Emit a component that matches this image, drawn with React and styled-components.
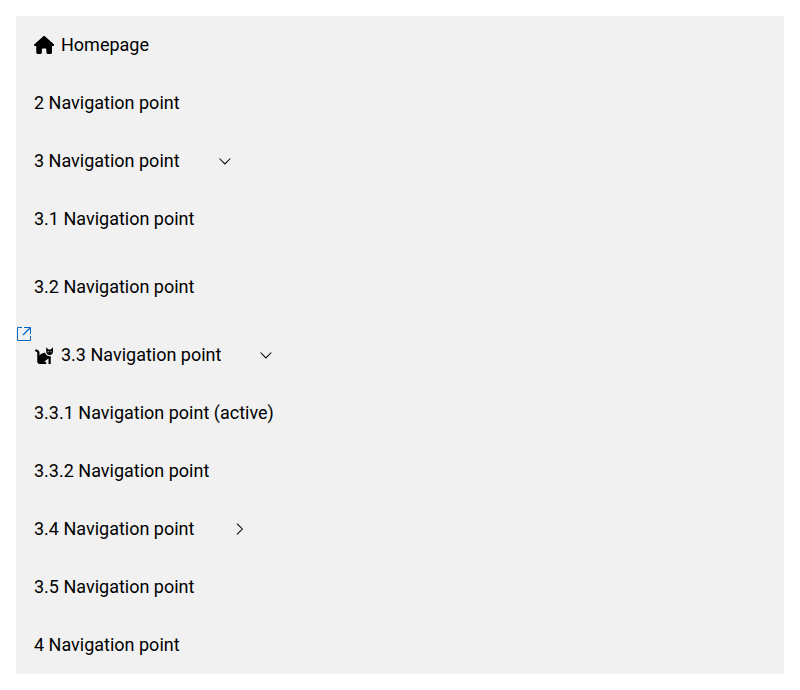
import React from "react";
import styled, { createGlobalStyle } from "styled-components";
import { FaCat } from "react-icons/fa";
import { FaHouse } from "react-icons/fa6";
const Global = createGlobalStyle`
  body { margin: 0; background: #fff; font-family: Roboto, sans-serif; -webkit-font-smoothing: antialiased; }
`;
const Nav = styled.nav`
  margin: 16px; background: #f1f1f1; color: #000;
`;
const List = styled.ul`
  list-style: none; margin: 0; padding: 0;
`;
const Item = styled.li`
  margin-bottom: ${(p) => p.$gap || 0}px;
`;
const Row = styled.div`
  display: flex; align-items: center; height: 58px; box-sizing: border-box; padding-left: 18px;
  font-size: 18px; line-height: 24px; font-weight: 400;
`;
const IconSlot = styled.span`
  display: flex; width: 20px; margin-right: 7px; justify-content: center;
  svg { flex: none; width: ${(p) => p.$width}px; height: 18px; }
`;
const Toggle = styled.button`
  display: flex; align-items: center; justify-content: center; width: 18px; height: 18px;
  margin-left: 36px; padding: 0; border: 0; background: none; color: inherit;
`;
const Anchored = styled.div`
  position: relative;
`;
const External = styled.svg`
  position: absolute; left: 0; top: 0; display: block;
`;
function Chevron({ open }) {
  return (
    <svg width="18" height="18" viewBox="0 0 18 18" fill="none" stroke="currentColor" strokeWidth="1.05">
      <path d={open ? "M3.5 6.5 8.9 11.9 14.3 6.5" : "M7 3.7 12.3 9 7 14.3"} />
    </svg>
  );
}
function Point({ label, icon, iconWidth = 18, open }) {
  return (
    <Row>
      {icon && <IconSlot $width={iconWidth}>{icon}</IconSlot>}
      <span>{label}</span>
      {open !== undefined && <Toggle aria-label="Toggle submenu" aria-expanded={open}><Chevron open={open} /></Toggle>}
    </Row>
  );
}
export default function App() {
  return (
    <>
      <Global />
      <Nav>
        <List>
          <Item><Point label="Homepage" icon={<FaHouse />} iconWidth={20.25} /></Item>
          <Item><Point label="2 Navigation point" /></Item>
          <Item>
            <Point label="3 Navigation point" open />
            <List>
              <Item $gap={10}><Point label="3.1 Navigation point" /></Item>
              <Item $gap={10}><Point label="3.2 Navigation point" /></Item>
              <Item>
                <Anchored>
                  <External width="16" height="16" viewBox="0 0 16 16" fill="none" stroke="#0069c8">
                    <path d="M6 1.5H1.5v13h13V10M8 1.5h6.5V8" />
                    <path d="M14.5 1.5 7 9" strokeWidth="1.25" />
                  </External>
                  <Point label="3.3 Navigation point" icon={<FaCat />} open />
                </Anchored>
                <List>
                  <Item><Point label="3.3.1 Navigation point (active)" /></Item>
                  <Item><Point label="3.3.2 Navigation point" /></Item>
                </List>
              </Item>
              <Item><Point label="3.4 Navigation point" open={false} /></Item>
              <Item><Point label="3.5 Navigation point" /></Item>
            </List>
          </Item>
          <Item><Point label="4 Navigation point" /></Item>
        </List>
      </Nav>
    </>
  );
}
